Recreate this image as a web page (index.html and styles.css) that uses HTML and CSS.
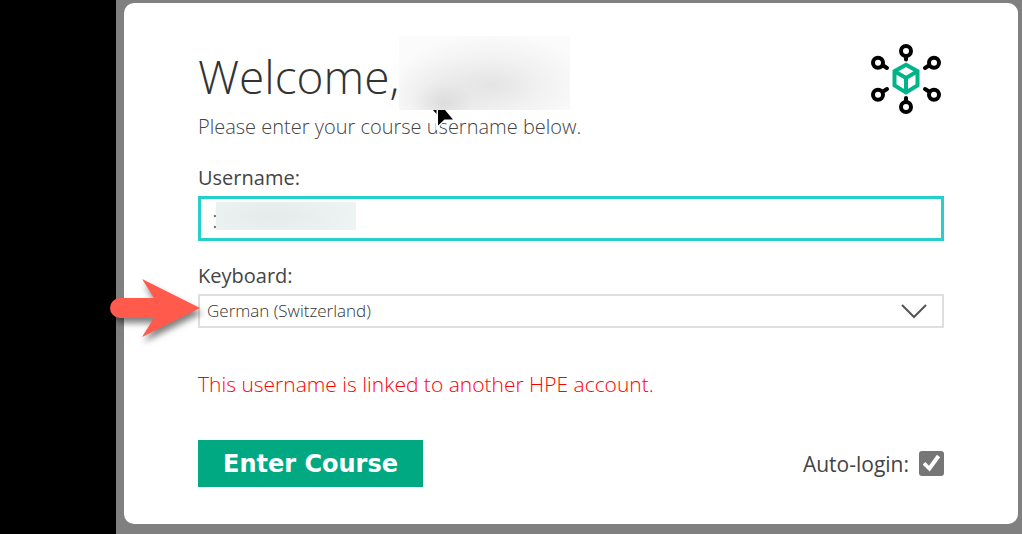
FILE: index.html
```html
<!DOCTYPE html>
<html lang="en">
<head>
<meta charset="utf-8">
<title>Welcome</title>
<meta name="viewport" content="width=device-width, initial-scale=1">
<link rel="stylesheet" href="styles.css">
</head>
<body>
<div class="gutter"></div>
<main class="stage">
  <form class="card">
    <header class="header">
      <div class="intro">
        <div class="title-row">
          <h1 class="title">Welcome,</h1>
          <span class="redacted-name"></span>
          <svg class="cursor" width="28" height="22" viewBox="0 0 28 22" aria-hidden="true">
            <path d="M2 0L6 6V20.500L13 12.500H26L14 0Z" fill="#fff"/>
            <path d="M8 0H15L23 9.500H14.500L8 15.500Z" fill="#000"/>
            <path d="M3 0H6.500V4Z" fill="#000"/>
          </svg>
        </div>
        <p class="subtitle">Please enter your course username below.</p>
      </div>
      <svg class="logo" width="70" height="70" viewBox="0 0 70 70" fill="none" aria-hidden="true">
        <g stroke="#000" stroke-width="4" stroke-linecap="round">
          <circle cx="35" cy="7" r="5"/><path d="M35 12V15.500"/>
          <circle cx="35" cy="63" r="5"/><path d="M35 54V58"/>
          <circle cx="7" cy="18.800" r="5"/><path d="M12 21.500L16 24"/>
          <circle cx="63" cy="18.800" r="5"/><path d="M58 21.500L54 24"/>
          <circle cx="7" cy="50.800" r="5"/><path d="M12 47.500L16 45"/>
          <circle cx="63" cy="50.800" r="5"/><path d="M58 47.500L54 45"/>
        </g>
        <path d="M35 20.700L46.500 27.200V41.500L35 48.500L23.500 41.500V27.200ZM23.500 27.200L35 34L46.500 27.200M35 34V48.500" stroke="#01b488" stroke-width="4"/>
      </svg>
    </header>

    <label class="label" for="username">Username:</label>
    <div class="input-wrap">
      <input class="input" id="username" type="text" value=":">
      <span class="redacted-user"></span>
    </div>

    <label class="label" for="keyboard">Keyboard:</label>
    <div class="select-wrap">
      <select class="select" id="keyboard"><option>German (Switzerland)</option></select>
      <svg class="chevron" width="26" height="15" viewBox="0 0 26 15" fill="none" aria-hidden="true">
        <path d="M1 1L13 13L25 1" stroke="#555" stroke-width="2"/>
      </svg>
      <svg class="arrow" width="94" height="66" viewBox="0 0 94 66" aria-hidden="true">
        <path d="M10 20H44L32 1L90 30L32 59L44 40H10A10 10 0 0 1 10 20Z" fill="#ff5a4c"/>
      </svg>
    </div>

    <p class="error">This username is linked to another HPE account.</p>

    <div class="actions">
      <button class="submit" type="button">Enter Course</button>
      <label class="auto" for="auto">Auto-login:
        <input class="check" id="auto" type="checkbox" checked>
      </label>
    </div>
  </form>
</main>
</body>
</html>
```
FILE: styles.css
```css
* { box-sizing: border-box; }
body {
  margin: 0;
  min-height: 100vh;
  display: flex;
  background: #808080;
  color: #444;
  font-family: "Open Sans", "Noto Sans", sans-serif;
  font-size: 20px;
  line-height: 28px;
}
.gutter { flex: 0 0 116px; background: #000; }
.stage { flex: 1; min-width: 0; padding: 3px 4px 8px 8px; }
.card {
  padding: 33px 74px 37px;
  background: #fff;
  border-radius: 10px;
}
.header { display: flex; justify-content: space-between; margin-bottom: 23px; }
.title-row { position: relative; display: flex; height: 74px; }
.title {
  margin: 0;
  color: #333;
  font-size: 46px;
  font-weight: 300;
  line-height: 80px;
}
.redacted-name {
  width: 171px;
  height: 74px;
  background:
    radial-gradient(ellipse 60px 44px at 26% 90%, rgba(205, 205, 205, .6), rgba(225, 225, 225, .3) 50%, transparent),
    radial-gradient(ellipse 100px 52px at 54% 66%, rgba(218, 218, 218, .7), rgba(232, 232, 232, .5) 50%, transparent),
    #fbfbfb;
}
.cursor { position: absolute; left: 232px; top: 74px; z-index: 1; }
.subtitle { margin: 3px 0 0; font-weight: 300; }
.logo { flex: none; margin: 8px 3px 0 0; overflow: visible; }
.label { display: block; }
.input-wrap { position: relative; margin: 4px 0 21px; }
.input {
  display: block;
  width: 100%;
  height: 45px;
  padding: 0 11px;
  border: 3px solid #24d0c9;
  background: #fff;
  color: #555;
  font: inherit;
  font-size: 24px;
  font-weight: 300;
  outline: 0;
}
.redacted-user {
  position: absolute;
  left: 18px;
  top: 6px;
  width: 140px;
  height: 28px;
  background: radial-gradient(ellipse 110px 34px at 40% 50%, #e5eaeb, #f0f6f6);
}
.select-wrap { position: relative; margin: 4px 0 42px; }
.select {
  display: block;
  width: 100%;
  height: 34px;
  padding: 0 7px;
  border: 2px solid #dfdfdf;
  border-radius: 0;
  background: #fff;
  color: #333;
  font: inherit;
  font-size: 17px;
  font-weight: 300;
  appearance: none;
}
.chevron { position: absolute; right: 17px; top: 10px; pointer-events: none; }
.arrow {
  position: absolute;
  left: -88px;
  top: -16px;
  overflow: visible;
  filter: drop-shadow(2px 5px 3px rgba(0, 0, 0, .5));
  pointer-events: none;
}
.error { margin: 0 0 42px; color: #f00; font-size: 21px; font-weight: 300; }
.actions { display: flex; justify-content: space-between; align-items: center; }
.submit {
  height: 47px;
  padding: 0 25px;
  border: 0;
  background: #01a982;
  color: #fff;
  font: bold 24px "DejaVu Sans", sans-serif;
}
.auto { display: flex; align-items: center; gap: 10px; font-size: 21px; }
.check {
  appearance: none;
  width: 25px;
  height: 25px;
  margin: 0;
  border-radius: 3px;
  background: #767676;
  display: grid;
  place-items: center;
}
.check:checked::before {
  content: "";
  width: 18px;
  height: 18px;
  background: #fff;
  clip-path: polygon(0 55%, 16% 41%, 36% 62%, 80% 2%, 98% 15%, 40% 94%);
}
```
